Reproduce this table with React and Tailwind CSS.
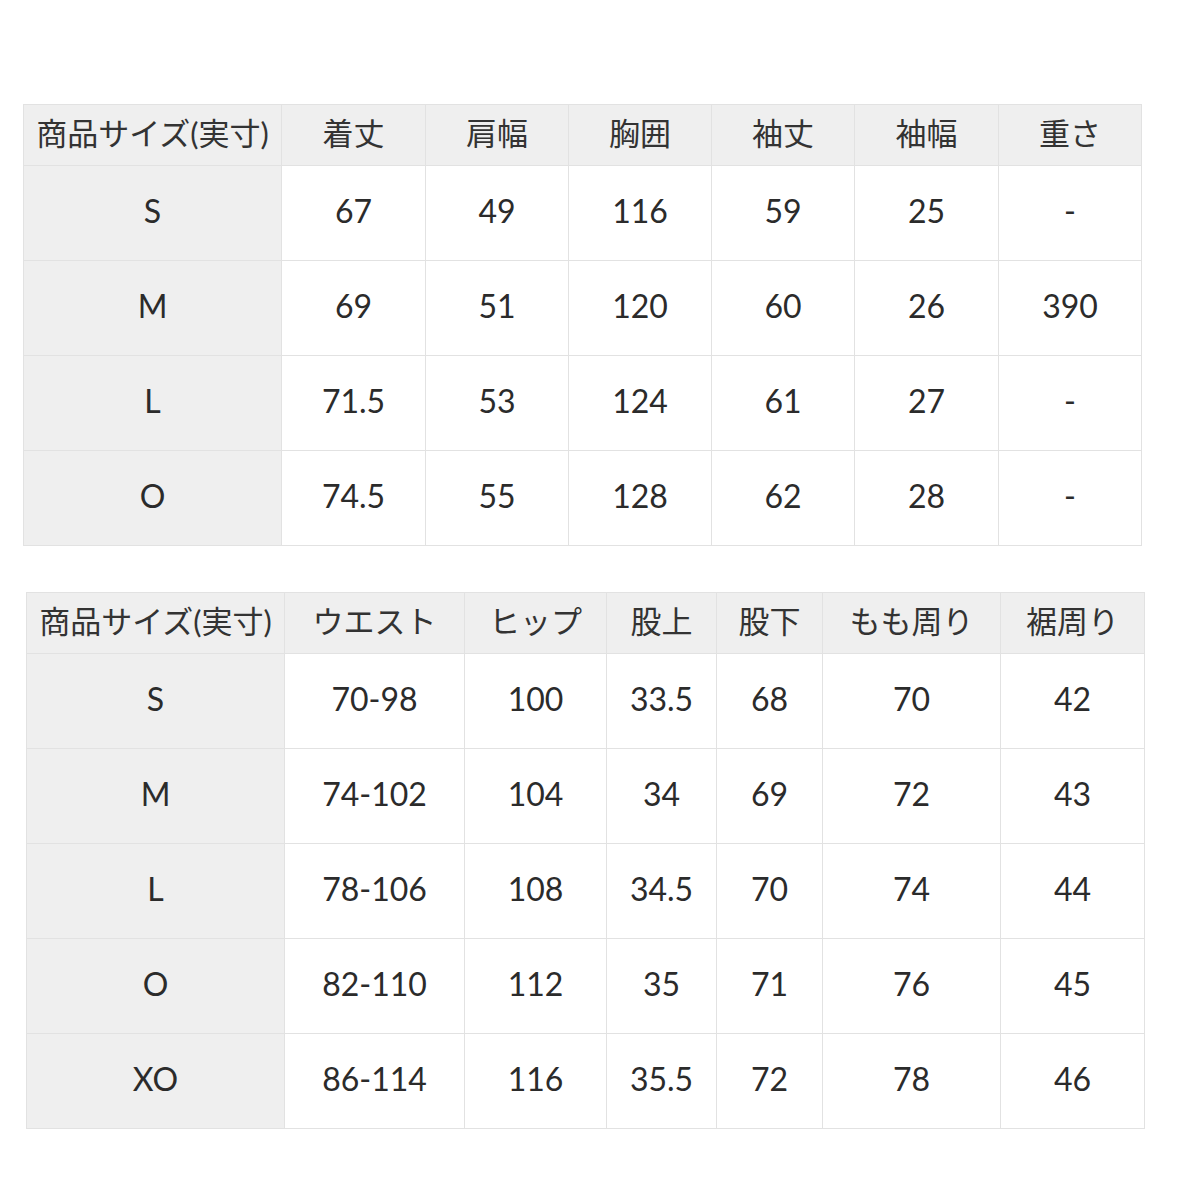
const tops = {
  widths: [258, 144, 143, 143, 143, 144, 143],
  head: ["商品サイズ(実寸)", "着丈", "肩幅", "胸囲", "袖丈", "袖幅", "重さ"],
  rows: [
    ["S", "67", "49", "116", "59", "25", "-"],
    ["M", "69", "51", "120", "60", "26", "390"],
    ["L", "71.5", "53", "124", "61", "27", "-"],
    ["O", "74.5", "55", "128", "62", "28", "-"],
  ],
};

const bottoms = {
  widths: [258, 180, 142, 110, 106, 178, 144],
  head: ["商品サイズ(実寸)", "ウエスト", "ヒップ", "股上", "股下", "もも周り", "裾周り"],
  rows: [
    ["S", "70-98", "100", "33.5", "68", "70", "42"],
    ["M", "74-102", "104", "34", "69", "72", "43"],
    ["L", "78-106", "108", "34.5", "70", "74", "44"],
    ["O", "82-110", "112", "35", "71", "76", "45"],
    ["XO", "86-114", "116", "35.5", "72", "78", "46"],
  ],
};

function SizeTable({ data, className }) {
  return (
    <table className={`table-fixed border-collapse w-[1118px] ${className}`}>
      <colgroup>
        {data.widths.map((w, i) => (
          <col key={i} style={{ width: w }} />
        ))}
      </colgroup>
      <thead>
        <tr className="h-[61px] bg-[#efefef]">
          {data.head.map((h, i) => (
            <th
              key={i}
              className="border border-[#e2e2e2] font-normal text-[31px] leading-none text-[#333] whitespace-nowrap pb-[4px]"
            >
              {h}
            </th>
          ))}
        </tr>
      </thead>
      <tbody>
        {data.rows.map((row, r) => (
          <tr key={r} className="h-[95px]">
            {row.map((cell, i) => (
              <td
                key={i}
                className={`border border-[#e2e2e2] text-center text-[32px] leading-none text-[#2b2b2b] pb-[4px] ${
                  i === 0 ? "bg-[#efefef]" : "bg-white"
                }`}
              >
                {cell}
              </td>
            ))}
          </tr>
        ))}
      </tbody>
    </table>
  );
}

export default function App() {
  return (
    <div
      className="w-[1200px] h-[1200px] bg-white pt-[104px]"
      style={{ fontFamily: 'Lato, "Noto Sans CJK JP", sans-serif' }}
    >
      <SizeTable data={tops} className="ml-[23px]" />
      <SizeTable data={bottoms} className="ml-[26px] mt-[46px]" />
    </div>
  );
}
